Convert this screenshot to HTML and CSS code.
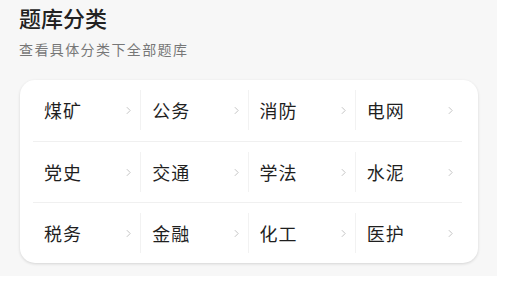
FILE: index.html
```html
<!DOCTYPE html>
<html lang="zh-CN">
<head>
    <meta charset="UTF-8">
    <meta name="viewport" content="width=device-width, initial-scale=1.0">
    <title>题库分类</title>
    <link rel="stylesheet" href="styles.css">
</head>
<body>
    <div class="page">
        <div class="header">
            <h2 class="title">题库分类</h2>
            <p class="subtitle">查看具体分类下全部题库</p>
        </div>

        <div class="card">
            <div class="row">
                <div class="cell"><span class="name">煤矿</span><svg class="arrow" viewBox="0 0 6 10"><polyline points="1,1 5,5 1,9"/></svg></div>
                <div class="cell"><span class="name">公务</span><svg class="arrow" viewBox="0 0 6 10"><polyline points="1,1 5,5 1,9"/></svg></div>
                <div class="cell"><span class="name">消防</span><svg class="arrow" viewBox="0 0 6 10"><polyline points="1,1 5,5 1,9"/></svg></div>
                <div class="cell"><span class="name">电网</span><svg class="arrow" viewBox="0 0 6 10"><polyline points="1,1 5,5 1,9"/></svg></div>
            </div>
            <div class="row">
                <div class="cell"><span class="name">党史</span><svg class="arrow" viewBox="0 0 6 10"><polyline points="1,1 5,5 1,9"/></svg></div>
                <div class="cell"><span class="name">交通</span><svg class="arrow" viewBox="0 0 6 10"><polyline points="1,1 5,5 1,9"/></svg></div>
                <div class="cell"><span class="name">学法</span><svg class="arrow" viewBox="0 0 6 10"><polyline points="1,1 5,5 1,9"/></svg></div>
                <div class="cell"><span class="name">水泥</span><svg class="arrow" viewBox="0 0 6 10"><polyline points="1,1 5,5 1,9"/></svg></div>
            </div>
            <div class="row">
                <div class="cell"><span class="name">税务</span><svg class="arrow" viewBox="0 0 6 10"><polyline points="1,1 5,5 1,9"/></svg></div>
                <div class="cell"><span class="name">金融</span><svg class="arrow" viewBox="0 0 6 10"><polyline points="1,1 5,5 1,9"/></svg></div>
                <div class="cell"><span class="name">化工</span><svg class="arrow" viewBox="0 0 6 10"><polyline points="1,1 5,5 1,9"/></svg></div>
                <div class="cell"><span class="name">医护</span><svg class="arrow" viewBox="0 0 6 10"><polyline points="1,1 5,5 1,9"/></svg></div>
            </div>
        </div>
    </div>
</body>
</html>
```

FILE: styles.css
```css
body {
    margin: 0;
    background: #ffffff;
    font-family: "Noto Sans CJK SC", "Noto Sans", sans-serif;
}

.page {
    width: 497px;
    height: 276px;
    background: #f7f7f7;
    padding-top: 2px;
    box-sizing: border-box;
}

.header {
    padding-left: 19px;
}

.title {
    margin: 0;
    font-size: 22px;
    line-height: 30px;
    font-weight: 500;
    color: #222222;
}

.subtitle {
    margin: 7px 0 0;
    font-size: 14px;
    line-height: 20px;
    letter-spacing: 1.4px;
    color: #777777;
}

.card {
    margin: 21px 0 0 20px;
    width: 458px;
    padding: 0 16px 0 13px;
    box-sizing: border-box;
    background: #ffffff;
    border-radius: 15px;
    box-shadow: 0 1px 3px rgba(0, 0, 0, 0.14);
}

.row {
    display: grid;
    grid-template-columns: repeat(4, 1fr);
    padding: 10px 0;
    height: 61px;
    box-sizing: border-box;
}

.row + .row {
    border-top: 1px solid #f0f0f0;
}

.cell {
    display: flex;
    align-items: center;
    justify-content: space-between;
    height: 40px;
    padding: 0 9px 0 11px;
}

.cell + .cell {
    border-left: 1px solid #f2f2f2;
}

.name {
    font-size: 18px;
    letter-spacing: 1px;
    color: #1f1f1f;
}

.arrow {
    width: 5px;
    height: 9px;
    fill: none;
    stroke: #c4c4c4;
    stroke-width: 1.2;
}
```
